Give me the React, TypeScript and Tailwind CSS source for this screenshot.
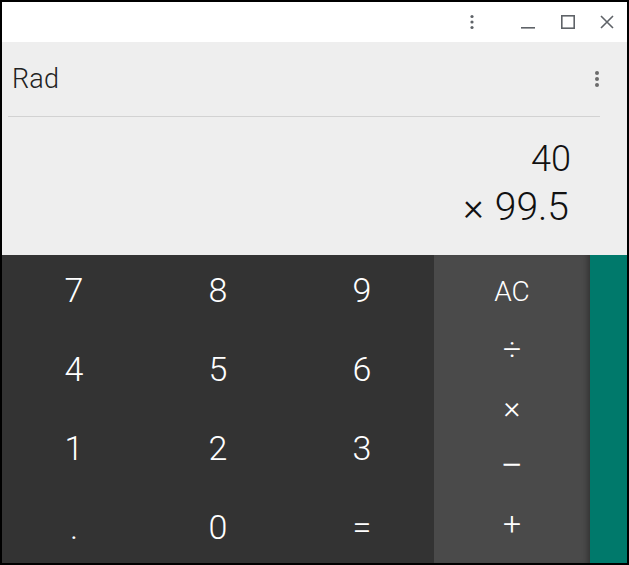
import React from "react";

const digits = ["7", "8", "9", "4", "5", "6", "1", "2", "3", ".", "0", "="];
const ops = ["AC", "÷", "×", "−", "+"];

export default function App() {
  return (
    <div
      className="w-[629px] h-[565px] bg-black p-[2px] flex flex-col"
      style={{ fontFamily: "Roboto, 'Liberation Sans', sans-serif" }}
    >
      <div className="flex-1 flex flex-col bg-white overflow-hidden">
        {/* title bar */}
        <div className="h-[40px] bg-white flex items-center justify-end shrink-0">
          <svg width="20" height="20" viewBox="0 0 20 20" className="mr-[36px]">
            <circle cx="10" cy="4.5" r="1.6" fill="#5f6368" />
            <circle cx="10" cy="10" r="1.6" fill="#5f6368" />
            <circle cx="10" cy="15.5" r="1.6" fill="#5f6368" />
          </svg>
          <svg width="20" height="20" viewBox="0 0 20 20" className="mr-[20px]">
            <rect x="3" y="15" width="14" height="1.6" fill="#5f6368" />
          </svg>
          <svg width="20" height="20" viewBox="0 0 20 20" className="mr-[19px]">
            <rect x="3.8" y="3.8" width="12.4" height="12.4" fill="none" stroke="#5f6368" strokeWidth="1.6" />
          </svg>
          <svg width="20" height="20" viewBox="0 0 20 20" className="mr-[10px]">
            <path d="M4 4 L16 16 M16 4 L4 16" stroke="#5f6368" strokeWidth="1.6" />
          </svg>
        </div>
        {/* display */}
        <div className="h-[213px] bg-[#eeeeee] flex flex-col shrink-0">
          <div className="h-[75px] flex items-center justify-between pl-[4px] ml-[6px] mr-[27px] border-b border-[#d2d2d2]">
            <span className="text-[27px] font-light text-[#222] tracking-[0.2px]">Rad</span>
            <svg width="20" height="20" viewBox="0 0 20 20" className="-mr-[7px]">
              <circle cx="10" cy="4" r="2" fill="#6b6b6b" />
              <circle cx="10" cy="10" r="2" fill="#6b6b6b" />
              <circle cx="10" cy="16" r="2" fill="#6b6b6b" />
            </svg>
          </div>
          <div className="flex flex-col items-end pr-[56px] pt-[18px] font-light text-[#111]">
            <span className="text-[36px] leading-[48px]">40</span>
            <span className="text-[39px] leading-[48px] mr-[2px] flex items-baseline">
              <span className="mr-[11px]">×</span>
              <span>99.5</span>
            </span>
          </div>
        </div>
        {/* keypad */}
        <div className="flex-1 flex overflow-hidden">
          <div className="w-[432px] bg-[#333333] overflow-hidden">
            <div className="grid grid-cols-3 grid-rows-[79px_79px_79px_79px] -mt-[4px]">
              {digits.map((d) => (
                <div key={d} className="flex items-center justify-center text-white text-[34px] font-light">
                  {d}
                </div>
              ))}
            </div>
          </div>
          <div className="w-[156px] bg-[#4a4a4a] flex flex-col pt-[6px] pb-[10px] shadow-[inset_-6px_0_6px_-4px_rgba(0,0,0,0.35)]">
            {ops.map((o) => (
              <div
                key={o}
                className={`flex-1 flex items-center justify-center text-white font-light ${
                  o === "AC" ? "text-[28px] pt-[2px]" : o === "−" ? "text-[40px] text-[#dddddd]" : "text-[32px]"
                }`}
              >
                {o}
              </div>
            ))}
          </div>
          <div className="flex-1 bg-[#00796b]" />
        </div>
      </div>
    </div>
  );
}
